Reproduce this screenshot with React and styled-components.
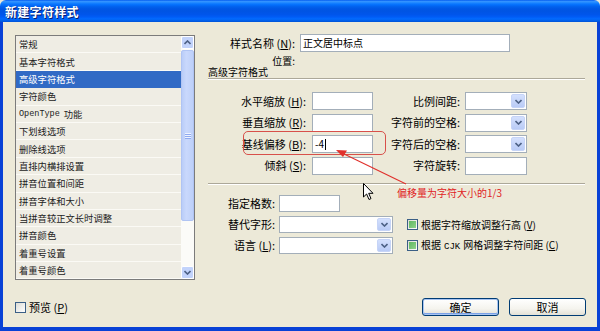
import React from "react";
import styled, { createGlobalStyle, css } from "styled-components";

const GlobalStyle = createGlobalStyle`
  html, body {
    margin: 0;
    padding: 0;
    background: #ece9d8;
  }
  * {
    box-sizing: border-box;
  }
`;

const CJK = `"Noto Sans CJK SC", "Noto Sans", "DejaVu Sans", sans-serif`;

const Window = styled.div`
  position: relative;
  width: 600px;
  height: 331px;
  display: flex;
  flex-direction: column;
  overflow: hidden;
  font-family: ${CJK};
  color: #000;
`;

const TitleBar = styled.div`
  height: 22px;
  flex: none;
  display: flex;
  align-items: center;
  padding-left: 5px;
  border-radius: 6px 6px 0 0;
  background: linear-gradient(
    180deg,
    #0058ee 0%,
    #3593ff 6%,
    #288eff 10%,
    #127dff 16%,
    #036ffc 22%,
    #0262ee 30%,
    #0057e5 40%,
    #0054e3 50%,
    #0055eb 66%,
    #005bf5 76%,
    #026afe 86%,
    #0062ef 92%,
    #0052d6 100%
  );
`;

const Title = styled.span`
  font-size: 12px;
  font-weight: 700;
  color: #fff;
  letter-spacing: 0.3px;
  text-shadow: 1px 1px 0 #0a1e6e;
`;

const Frame = styled.div`
  flex: 1;
  display: flex;
  flex-direction: column;
  background: #ece9d8;
  border-left: 3px solid #0841d6;
  border-right: 3px solid #0841d6;
  border-bottom: 4px solid #0841d6;
  padding: 12px 0 0 12px;
`;

const TopSection = styled.div`
  display: flex;
  height: 246px;
  gap: 13px;
`;

const ListBox = styled.div`
  width: 180px;
  height: 245px;
  margin-top: 1px;
  border: 1px solid #7b7b7b;
  display: flex;
  background: #efede4;
`;

const ListItems = styled.div`
  flex: 1;
  display: flex;
  flex-direction: column;
`;

const ListItem = styled.div`
  height: 17.4px;
  flex: none;
  display: flex;
  align-items: center;
  padding-left: 3px;
  font-size: 9.3px;
  color: #222;
  border-bottom: 1px solid #fbfaf5;
  white-space: nowrap;
  ${(p) =>
    p.$selected &&
    css`
      background: #316ac5;
      color: #fff;
      border-bottom-color: #316ac5;
    `}
`;

const Mono = styled.span`
  font-family: "Liberation Mono", "DejaVu Sans Mono", monospace;
  font-size: 8.5px;
  margin-right: 4px;
`;

const ScrollBar = styled.div`
  width: 13px;
  flex: none;
  display: flex;
  flex-direction: column;
  background: #fbfbf8;
`;

const ScrollButton = styled.div`
  height: 13px;
  flex: none;
  display: flex;
  align-items: center;
  justify-content: center;
  background: #c2d3fb;
  border: 1px solid #fff;
  border-radius: 2px;
`;

const Thumb = styled.div`
  height: 171px;
  flex: none;
  margin-top: 1px;
  background: linear-gradient(90deg, #bacdf8, #c9d8fc 40%, #bed0f9);
  border: 1px solid #b0c4f3;
  border-radius: 2px;
  display: flex;
  flex-direction: column;
  align-items: center;
  justify-content: center;
  gap: 1px;
`;

const Grip = styled.div`
  width: 6px;
  height: 1px;
  background: #eef3ff;
  box-shadow: 0 1px 0 #8faaf0;
`;

const Track = styled.div`
  flex: 1;
`;

const RightCol = styled.div`
  width: 377px;
  display: flex;
  flex-direction: column;
`;

const Row = styled.div`
  display: flex;
  align-items: center;
  height: ${(p) => p.$h || 18}px;
  margin-top: ${(p) => p.$mt || 0}px;
`;

const Label = styled.div`
  width: ${(p) => p.$w}px;
  flex: none;
  text-align: ${(p) => p.$align || "right"};
  padding-right: ${(p) => p.$pr || 0}px;
  font-size: ${(p) => p.$fs || 11}px;
  line-height: 1;
  white-space: nowrap;
  color: ${(p) => p.$color || "#000"};
`;

const U = styled.span`
  text-decoration: underline;
`;

const TextInput = styled.div`
  width: ${(p) => p.$w}px;
  height: ${(p) => p.$h || 18}px;
  flex: none;
  background: #fff;
  border: 1px solid #a3aeb9;
  display: flex;
  align-items: center;
  padding-left: 2px;
  font-size: 10px;
  line-height: 1;
  white-space: nowrap;
`;

const Caret = styled.span`
  display: inline-block;
  width: 1px;
  height: 11px;
  background: #000;
  margin-left: 1px;
`;

const Select = styled.div`
  width: ${(p) => p.$w}px;
  height: ${(p) => p.$h || 18}px;
  flex: none;
  background: #fff;
  border: 1px solid #a3aeb9;
  display: flex;
  justify-content: flex-end;
  padding: 1px;
`;

const DropButton = styled.div`
  width: 14px;
  height: 100%;
  display: flex;
  align-items: center;
  justify-content: center;
  border-radius: 2px;
  background: linear-gradient(180deg, #d4e0fd, #b9cbf6);
  border: 1px solid #c6d4f7;
`;

const Divider = styled.div`
  height: 2px;
  margin-top: ${(p) => p.$mt}px;
  border-top: 1px solid #aca899;
  border-bottom: 1px solid #fff;
`;

const SectionTitle = styled.div`
  height: 11px;
  font-size: 10px;
  line-height: 11px;
  white-space: nowrap;
`;

const Grid = styled.div`
  display: grid;
  grid-template-columns: ${(p) => p.$cols};
  grid-auto-rows: ${(p) => p.$rh}px;
  row-gap: ${(p) => p.$gap}px;
  margin-top: ${(p) => p.$mt}px;
  align-items: center;
`;

const Cell = styled.div`
  display: flex;
  align-items: center;
  justify-content: ${(p) => (p.$right ? "flex-end" : "flex-start")};
  padding-right: ${(p) => p.$pr || 0}px;
  font-size: 11px;
  line-height: 1;
  white-space: nowrap;
  grid-column: ${(p) => p.$col || "auto"};
  grid-row: ${(p) => p.$row || "auto"};
`;

const CheckBox = styled.div`
  width: 11px;
  height: 11px;
  flex: none;
  border: 1px solid #3b5f86;
  background: linear-gradient(135deg, #dcdcd6, #fff);
  display: flex;
  align-items: center;
  justify-content: center;
`;

const Mixed = styled.div`
  width: 7px;
  height: 7px;
  background: linear-gradient(135deg, #5fb860, #8fd28c);
`;

const CheckLabel = styled.span`
  font-size: ${(p) => p.$fs || 10}px;
  margin-left: 3px;
  line-height: 1;
  white-space: nowrap;
`;

const Latin = styled.span`
  font-family: "Liberation Mono", monospace;
  font-size: 9px;
  margin: 0 3px;
`;

const BottomBar = styled.div`
  display: flex;
  align-items: center;
  height: 18px;
  margin-top: 18px;
  padding-left: 0;
`;

const Buttons = styled.div`
  margin-left: auto;
  margin-right: 11px;
  display: flex;
  gap: 10px;
`;

const Button = styled.div`
  width: 77px;
  height: 18px;
  display: flex;
  align-items: center;
  justify-content: center;
  font-size: 11px;
  border: 1px solid #003c74;
  border-radius: 3px;
  background: linear-gradient(180deg, #fff 0%, #f5f4ee 60%, #e3e1d6 100%);
  ${(p) =>
    p.$default &&
    css`
      box-shadow: inset 0 0 0 1px #a8c4f1, inset 0 -1px 0 1px #7ba2e7;
    `}
`;

const Highlight = styled.div`
  position: absolute;
  left: 243px;
  top: 131px;
  width: 143px;
  height: 24px;
  border: 1.5px solid #d8504a;
  border-radius: 5px;
`;

const Note = styled.div`
  position: absolute;
  left: 397px;
  top: 187px;
  font-size: 10px;
  line-height: 12px;
  color: #e0231f;
  white-space: nowrap;
`;

const Overlay = styled.svg`
  position: absolute;
  left: ${(p) => p.$x}px;
  top: ${(p) => p.$y}px;
`;

const Chevron = ({ up }) => (
  <svg width="7" height="5" viewBox="0 0 7 5">
    <path
      d={up ? "M0.5 4 L3.5 1 L6.5 4" : "M0.5 1 L3.5 4 L6.5 1"}
      fill="none"
      stroke="#4d6185"
      strokeWidth="1.6"
    />
  </svg>
);

const Combo = ({ w, h }) => (
  <Select $w={w} $h={h}>
    <DropButton>
      <Chevron />
    </DropButton>
  </Select>
);

const items = [
  "常规",
  "基本字符格式",
  "高级字符格式",
  "字符颜色",
  "OPENTYPE",
  "下划线选项",
  "删除线选项",
  "直排内横排设置",
  "拼音位置和间距",
  "拼音字体和大小",
  "当拼音较正文长时调整",
  "拼音颜色",
  "着重号设置",
  "着重号颜色",
];

export default function App() {
  return (
    <>
      <GlobalStyle />
      <Window>
        <TitleBar>
          <Title>新建字符样式</Title>
        </TitleBar>
        <Frame>
          <TopSection>
            <ListBox>
              <ListItems>
                {items.map((it, i) => (
                  <ListItem key={it} $selected={i === 2}>
                    {it === "OPENTYPE" ? (
                      <>
                        <Mono>OpenType</Mono>功能
                      </>
                    ) : (
                      it
                    )}
                  </ListItem>
                ))}
              </ListItems>
              <ScrollBar>
                <ScrollButton>
                  <Chevron up />
                </ScrollButton>
                <Thumb>
                  <Grip />
                  <Grip />
                  <Grip />
                </Thumb>
                <Track />
                <ScrollButton>
                  <Chevron />
                </ScrollButton>
              </ScrollBar>
            </ListBox>

            <RightCol>
              <Row>
                <Label $w={92} $pr={5}>
                  样式名称 (<U>N</U>):
                </Label>
                <TextInput $w={210}>正文居中标点</TextInput>
              </Row>
              <Row $h={11} $mt={3}>
                <Label $w={87} $fs={10}>
                  位置:
                </Label>
              </Row>
              <SectionTitle>高级字符格式</SectionTitle>
              <Divider $mt={1} />

              <Grid $cols="104px 61px 92px 62px" $rh={18} $gap={3.67} $mt={12}>
                <Cell $right $pr={6}>
                  水平缩放 (<U>H</U>):
                </Cell>
                <TextInput $w={61} />
                <Cell $right $pr={5}>
                  比例间距:
                </Cell>
                <Combo w={62} />

                <Cell $right $pr={6}>
                  垂直缩放 (<U>R</U>):
                </Cell>
                <TextInput $w={61} />
                <Cell $right $pr={5}>
                  字符前的空格:
                </Cell>
                <Combo w={62} />

                <Cell $right $pr={6}>
                  基线偏移 (<U>B</U>):
                </Cell>
                <TextInput $w={61}>
                  -4
                  <Caret />
                </TextInput>
                <Cell $right $pr={5}>
                  字符后的空格:
                </Cell>
                <Combo w={62} />

                <Cell $right $pr={6}>
                  倾斜 (<U>S</U>):
                </Cell>
                <TextInput $w={61} />
                <Cell $right $pr={5}>
                  字符旋转:
                </Cell>
                <TextInput $w={62} />
              </Grid>

              <Divider $mt={8} />

              <Grid $cols="71px 114px 14px 1fr" $rh={17.5} $gap={3.5} $mt={10}>
                <Cell $right $pr={4} $col={1} $row={1}>
                  指定格数:
                </Cell>
                <Cell $col={2} $row={1}>
                  <TextInput $w={61} $h={17.5} />
                </Cell>
                <Cell $right $pr={4} $col={1} $row={2}>
                  替代字形:
                </Cell>
                <Cell $col={2} $row={2}>
                  <Combo w={114} h={17.5} />
                </Cell>
                <Cell $right $pr={4} $col={1} $row={3}>
                  语言 (<U>L</U>):
                </Cell>
                <Cell $col={2} $row={3}>
                  <Combo w={114} h={17.5} />
                </Cell>
                <Cell $col={4} $row={2}>
                  <CheckBox>
                    <Mixed />
                  </CheckBox>
                  <CheckLabel>
                    根据字符缩放调整行高 (<U>V</U>)
                  </CheckLabel>
                </Cell>
                <Cell $col={4} $row={3}>
                  <CheckBox>
                    <Mixed />
                  </CheckBox>
                  <CheckLabel>
                    根据<Latin>CJK</Latin>网格调整字符间距 (<U>C</U>)
                  </CheckLabel>
                </Cell>
              </Grid>
            </RightCol>
          </TopSection>

          <BottomBar>
            <CheckBox />
            <CheckLabel $fs={11}>
              预览 (<U>P</U>)
            </CheckLabel>
            <Buttons>
              <Button $default>确定</Button>
              <Button>取消</Button>
            </Buttons>
          </BottomBar>
        </Frame>

        <Highlight />
        <Overlay $x={330} $y={144} width="80" height="44" viewBox="0 0 80 44">
          <line x1="76" y1="40" x2="12" y2="9" stroke="#e0312c" strokeWidth="1.1" />
          <polygon points="6,6 17,6.5 13,13" fill="#e0312c" />
        </Overlay>
        <Note>偏移量为字符大小的1/3</Note>
        <Overlay $x={363} $y={183} width="11" height="18" viewBox="0 0 11 18">
          <path
            d="M0.5 0.5 L0.5 14 L3.6 11 L6 16.5 L8 15.6 L5.7 10.3 L10 10.3 Z"
            fill="#fff"
            stroke="#000"
            strokeWidth="1"
            strokeLinejoin="round"
          />
        </Overlay>
      </Window>
    </>
  );
}
